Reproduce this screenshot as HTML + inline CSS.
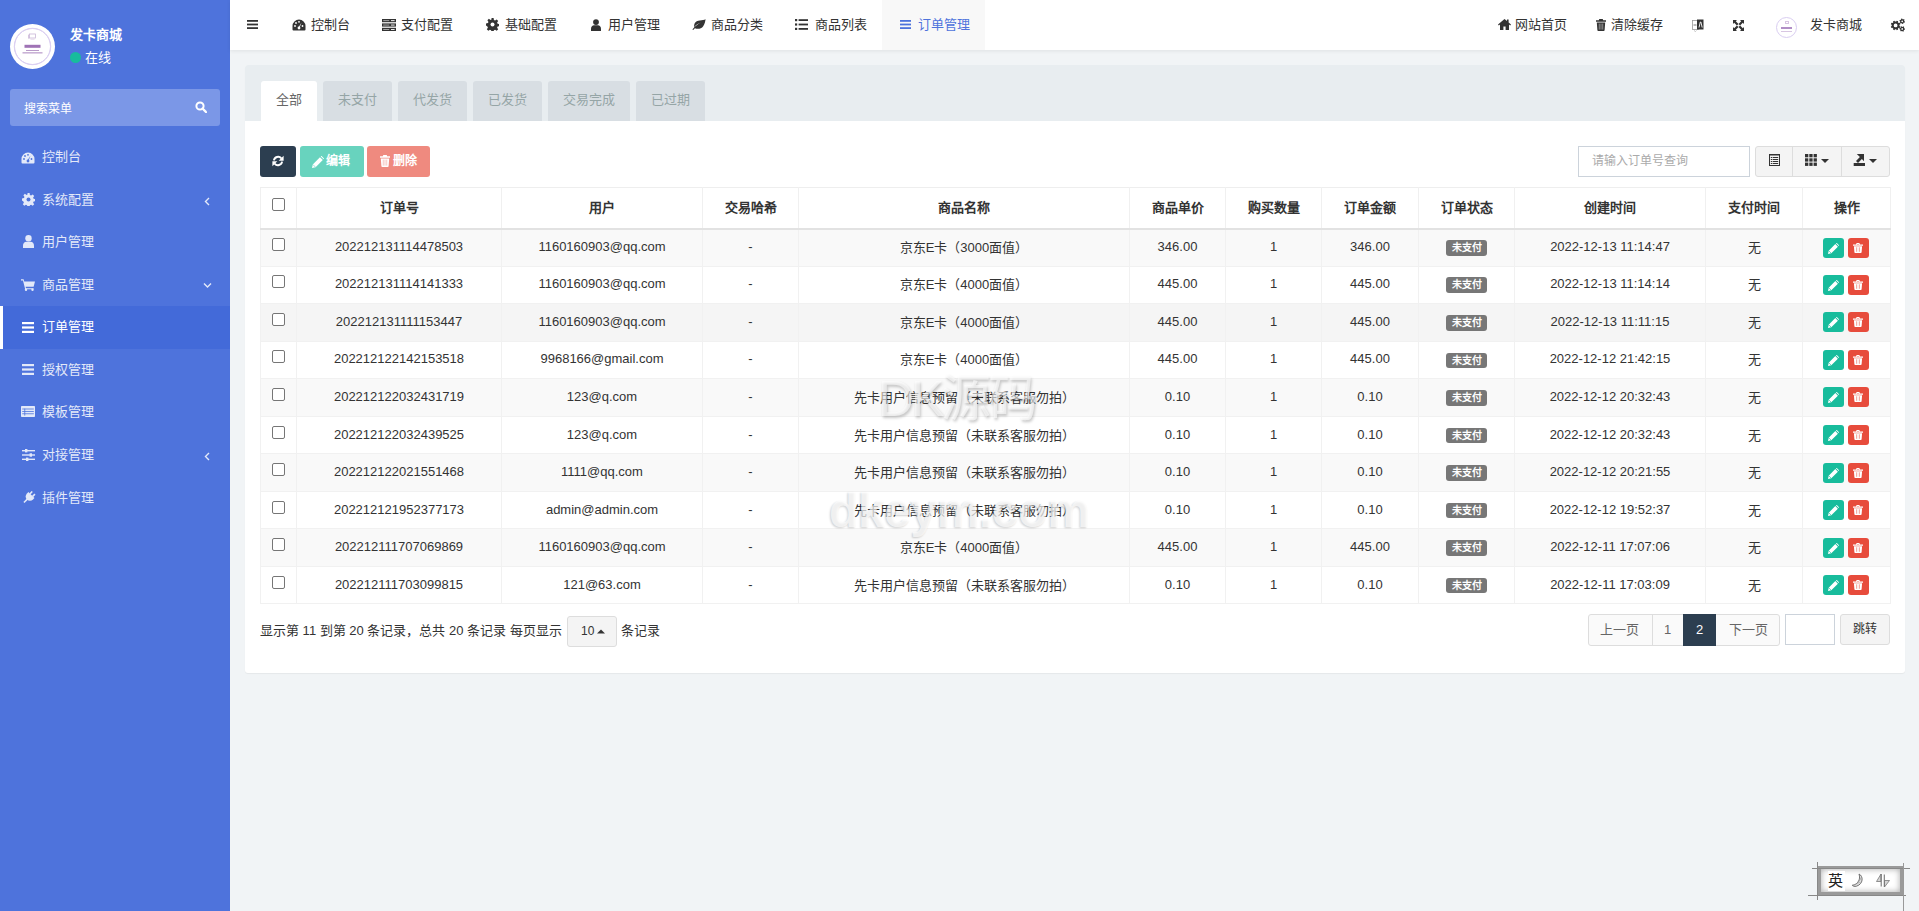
<!DOCTYPE html>
<html lang="zh-CN"><head><meta charset="utf-8">
<style>
*{box-sizing:border-box;margin:0;padding:0}
html,body{width:1919px;height:911px;overflow:hidden}
body{font-family:"Liberation Sans",sans-serif;font-size:13px;color:#333;background:#f1f4f6;position:relative}
.abs{position:absolute}
#sb{position:absolute;left:0;top:0;width:230px;height:911px;background:#4e73dc}
#hd{position:absolute;left:230px;top:0;width:1689px;height:50px;background:#fff;box-shadow:0 1px 4px rgba(0,0,0,.08)}
.nv{position:absolute;top:0;height:50px;line-height:50px;white-space:nowrap;color:#333;font-size:13px}
#panel{position:absolute;left:245px;top:65px;width:1660px;height:608px;background:#fff;border-radius:3px;box-shadow:0 1px 1px rgba(0,0,0,.05)}
#ph{position:absolute;left:0;top:0;width:1660px;height:56px;background:#e8edf0;border-radius:3px 3px 0 0}
.tab{position:absolute;top:16px;height:40px;line-height:38px;text-align:center;background:#d8dee3;color:#95a5a6;border-radius:3px 3px 0 0;font-size:13px}
.tab.on{background:#fff;color:#666}
.mi{position:absolute;left:0;width:230px;height:43px;line-height:43px;color:#fff;font-size:13px;white-space:nowrap}
.mi .t{position:absolute;left:42px;top:0}
.mi svg{position:absolute}
.btn{position:absolute;height:31px;border-radius:3px}
table{border-collapse:collapse;table-layout:fixed}
#tbl{font-size:13px;color:#333}
#tbl th{height:41px;border:1px solid #f0f0f0;border-top-color:#eee;border-bottom:2px solid #e2e2e2;text-align:center;font-weight:bold;padding:0 0 2px 0;vertical-align:middle}
#tbl td{height:37.55px;border:1px solid #f1f1f1;text-align:center;padding:0 0 2px 0;vertical-align:middle;white-space:nowrap}
.cb{display:inline-block;width:13px;height:13px;border:1px solid #767676;border-radius:2px;background:#fff;vertical-align:middle;position:relative;top:-3px}
.lbl{display:inline-block;background:#777;color:#fff;font-weight:bold;font-size:10px;line-height:15.6px;height:15.6px;padding:0 5.5px;border-radius:3px;vertical-align:middle;position:relative;top:1px}
.ab{display:inline-block;width:21px;height:20px;border-radius:3px;vertical-align:middle;position:relative;top:1px;left:-1px;margin:0 2px}
.ab svg{position:absolute;left:5px;top:5px}
.ae{background:#18bc9c}.ad{background:#e74c3c}
</style></head><body>
<div id="sb">
<div class="abs" style="left:10px;top:24px;width:45px;height:45px;border-radius:50%;background:#fff"></div>
<div class="abs" style="left:14px;top:28px;width:37px;height:37px;border-radius:50%;border:1px solid #d9cdf1"></div>
<svg class="abs" style="left:10px;top:24px" width="45" height="45" viewBox="0 0 45 45"><circle cx="22.5" cy="22.5" r="18.2" fill="none" stroke="#dcd0f2" stroke-width="1"/><rect x="19.5" y="10" width="6" height="4" fill="none" stroke="#c9b6d8" stroke-width=".8"/><rect x="18" y="10.6" width="1.2" height="4" fill="#d6c6e0"/><path d="M20.5 15.3h4" stroke="#d6c6e0" stroke-width=".6"/><rect x="14.5" y="20.8" width="16" height="3" fill="#8e5aa8" opacity=".85"/><rect x="16" y="26" width="13" height="1" fill="#b99bc9"/><rect x="12.5" y="28.5" width="20" height="0.8" fill="#9466ad"/></svg>
<div class="abs" style="left:70px;top:26px;color:#fff;font-weight:bold;font-size:13px;line-height:18px">发卡商城</div>
<div class="abs" style="left:70px;top:52px;width:11px;height:11px;border-radius:50%;background:#18bc9c"></div>
<div class="abs" style="left:85px;top:49px;color:#fff;font-size:13px;line-height:18px">在线</div>
<div class="abs" style="left:10px;top:89px;width:210px;height:37px;border-radius:3px;background:#7b97e7"></div>
<div class="abs" style="left:24px;top:100.5px;color:#fff;font-size:12px;line-height:17px">搜索菜单</div>
<svg class="abs" style="left:195px;top:101px" width="12" height="12" viewBox="0 0 12 12"><circle cx="5" cy="5" r="3.6" fill="none" stroke="#fff" stroke-width="2"/><path d="M7.5 7.5L11 11" stroke="#fff" stroke-width="2.4" stroke-linecap="round"/></svg>
<div class="mi" style="top:134.5px;"><svg style="left:21px;top:17.0px;fill:#e3e9f9" width="14" height="12" viewBox="0 0 14 12"><path d="M7 0.5A6.5 6.5 0 0 0 0.5 7v3.5a1 1 0 0 0 1 1h11a1 1 0 0 0 1-1V7A6.5 6.5 0 0 0 7 0.5z" /><g fill="#4e73dc"><circle cx="3" cy="7" r="0.9"/><circle cx="4" cy="4" r="0.9"/><circle cx="7" cy="2.8" r="0.9"/><circle cx="10.5" cy="7" r="0.9"/><path d="M9.6 3.4L7.6 8.6 6.6 8.2z"/><circle cx="7" cy="9" r="1.4"/></g></svg><span class="t" style="color:#e3e9f9;top:0px">控制台</span></div>
<div class="mi" style="top:177.5px;"><svg style="left:22px;top:15.5px;fill:#e3e9f9" width="13" height="13" viewBox="0 0 13 13"><path d="M5.4 0h2.2l.3 1.9 1.2.6 1.6-1.1 1.5 1.5-1.1 1.6.5 1.2 1.9.3v2.2l-1.9.3-.5 1.2 1.1 1.6-1.5 1.5-1.6-1.1-1.2.5-.3 1.9H5.4l-.3-1.9-1.2-.5-1.6 1.1-1.5-1.5 1.1-1.6-.5-1.2L0 7.6V5.4l1.9-.3.6-1.2-1.1-1.6 1.5-1.5 1.6 1.1 1.2-.6z"/><circle cx="6.5" cy="6.5" r="2" fill="#4e73dc"/></svg><span class="t" style="color:#e3e9f9;top:0px">系统配置</span><svg style="left:204px;top:19px" width="6" height="9" viewBox="0 0 6 9"><path d="M5 1L1.5 4.5 5 8" fill="none" stroke="#e3e9f9" stroke-width="1.4"/></svg></div>
<div class="mi" style="top:219.5px;"><svg style="left:23px;top:15.5px;fill:#e3e9f9" width="11" height="13" viewBox="0 0 11 13"><circle cx="5.5" cy="3.3" r="3.2"/><path d="M0 13v-2.5C0 8.3 1.6 6.8 3.3 6.8h4.4c1.7 0 3.3 1.5 3.3 3.7V13z"/></svg><span class="t" style="color:#e3e9f9;top:0px">用户管理</span></div>
<div class="mi" style="top:262.5px;"><svg style="left:21px;top:16.5px;fill:#e3e9f9" width="14" height="12" viewBox="0 0 14 12"><path d="M0 0.3h2.6l.6 2.2H14l-1.4 5.3H4.6l.4 1.4h7.6v1H4.2L2 1.4H0z"/><circle cx="5" cy="10.8" r="1.2"/><circle cx="11.5" cy="10.8" r="1.2"/></svg><span class="t" style="color:#e3e9f9;top:0px">商品管理</span><svg style="left:203px;top:19px" width="9" height="6" viewBox="0 0 9 6"><path d="M1 1.5L4.5 5 8 1.5" fill="none" stroke="#e3e9f9" stroke-width="1.4"/></svg></div>
<div class="mi" style="top:306.0px;background:#436ad9;"><div class="abs" style="left:0;top:0;width:3px;height:43px;background:#fff"></div><svg style="left:22px;top:15.5px;fill:#fff" width="13" height="11" viewBox="0 0 13 11"><rect x="0" y="0" width="12" height="2.2"/><rect x="0" y="4.4" width="12" height="2.2"/><rect x="0" y="8.8" width="12" height="2.2"/></svg><span class="t" style="color:#fff;top:-1px">订单管理</span></div>
<div class="mi" style="top:347.5px;"><svg style="left:22px;top:16.5px;fill:#e3e9f9" width="13" height="11" viewBox="0 0 13 11"><rect x="0" y="0" width="12" height="2.2"/><rect x="0" y="4.4" width="12" height="2.2"/><rect x="0" y="8.8" width="12" height="2.2"/></svg><span class="t" style="color:#e3e9f9;top:0px">授权管理</span></div>
<div class="mi" style="top:389.5px;"><svg style="left:21px;top:16.5px;fill:#e3e9f9" width="14" height="11" viewBox="0 0 14 11"><path d="M0.8 0h12.4a.8.8 0 0 1 .8.8v9.4a.8.8 0 0 1-.8.8H0.8a.8.8 0 0 1-.8-.8V0.8A.8.8 0 0 1 .8 0z"/><g fill="#4e73dc"><rect x="1.2" y="2.6" width="11.6" height="0.8"/><rect x="1.2" y="5" width="11.6" height="0.8"/><rect x="1.2" y="7.4" width="11.6" height="0.8"/><rect x="3.4" y="2.6" width="0.8" height="7"/></g></svg><span class="t" style="color:#e3e9f9;top:0px">模板管理</span></div>
<div class="mi" style="top:432.5px;"><svg style="left:22px;top:16.5px;fill:#e3e9f9" width="13" height="12" viewBox="0 0 13 12"><rect x="0" y="1" width="13" height="1.4"/><rect x="0" y="5.3" width="13" height="1.4"/><rect x="0" y="9.6" width="13" height="1.4"/><rect x="3" y="0" width="2.4" height="3.4"/><rect x="7.6" y="4.3" width="2.4" height="3.4"/><rect x="4" y="8.6" width="2.4" height="3.4"/></svg><span class="t" style="color:#e3e9f9;top:0px">对接管理</span><svg style="left:204px;top:19px" width="6" height="9" viewBox="0 0 6 9"><path d="M5 1L1.5 4.5 5 8" fill="none" stroke="#e3e9f9" stroke-width="1.4"/></svg></div>
<div class="mi" style="top:475.5px;"><svg style="left:21px;top:15.0px;fill:#e3e9f9" width="15" height="14" viewBox="0 0 15 14"><g transform="translate(8.2 6.2) rotate(45) scale(0.78) translate(-5 -8)"><rect x="1.6" y="0" width="2" height="4.5"/><rect x="6.4" y="0" width="2" height="4.5"/><path d="M-0.5 4h11v2.6a5.5 5.5 0 0 1-5.5 5.5 5.5 5.5 0 0 1-5.5-5.5z"/><rect x="4" y="11" width="2" height="6.5"/></g></svg><span class="t" style="color:#e3e9f9;top:0px">插件管理</span></div>
</div>
<div id="hd"><svg class="abs" style="left:17px;top:20px;fill:#333" width="11" height="9" viewBox="0 0 11 9"><rect y="0" width="11" height="1.8"/><rect y="3.6" width="11" height="1.8"/><rect y="7.2" width="11" height="1.8"/></svg><svg class="abs" style="left:62px;top:19px;fill:#333" width="14" height="12" viewBox="0 0 14 12"><path d="M7 0.5A6.5 6.5 0 0 0 0.5 7v3.5a1 1 0 0 0 1 1h11a1 1 0 0 0 1-1V7A6.5 6.5 0 0 0 7 0.5z" /><g fill="#fff"><circle cx="3" cy="7" r="0.9"/><circle cx="4" cy="4" r="0.9"/><circle cx="7" cy="2.8" r="0.9"/><circle cx="10.5" cy="7" r="0.9"/><path d="M9.6 3.4L7.6 8.6 6.6 8.2z"/><circle cx="7" cy="9" r="1.4"/></g></svg><div class="nv" style="left:81px;top:0px;color:#333">控制台</div>
<svg class="abs" style="left:152px;top:19px;fill:#333" width="14" height="12" viewBox="0 0 14 12"><rect x="0" y="0" width="14" height="3.2"/><rect x="0" y="4.4" width="14" height="3.2"/><rect x="0" y="8.8" width="14" height="3.2"/><g fill="#fff"><rect x="9" y="1.2" width="3.6" height="0.9"/><rect x="9" y="5.6" width="3.6" height="0.9"/><rect x="9" y="10" width="3.6" height="0.9"/><rect x="1.2" y="1.2" width="6" height="0.9" opacity=".6"/><rect x="1.2" y="5.6" width="6" height="0.9" opacity=".6"/><rect x="1.2" y="10" width="6" height="0.9" opacity=".6"/></g></svg><div class="nv" style="left:171px;top:0px;color:#333">支付配置</div>
<svg class="abs" style="left:256px;top:18px;fill:#333" width="13" height="13" viewBox="0 0 13 13"><path d="M5.4 0h2.2l.3 1.9 1.2.6 1.6-1.1 1.5 1.5-1.1 1.6.5 1.2 1.9.3v2.2l-1.9.3-.5 1.2 1.1 1.6-1.5 1.5-1.6-1.1-1.2.5-.3 1.9H5.4l-.3-1.9-1.2-.5-1.6 1.1-1.5-1.5 1.1-1.6-.5-1.2L0 7.6V5.4l1.9-.3.6-1.2-1.1-1.6 1.5-1.5 1.6 1.1 1.2-.6z"/><circle cx="6.5" cy="6.5" r="2" fill="#fff"/></svg><div class="nv" style="left:274.5px;top:0px;color:#333">基础配置</div>
<svg class="abs" style="left:361px;top:19px;fill:#333" width="10" height="12" viewBox="0 0 11 13"><circle cx="5.5" cy="3.3" r="3.2"/><path d="M0 13v-2.5C0 8.3 1.6 6.8 3.3 6.8h4.4c1.7 0 3.3 1.5 3.3 3.7V13z"/></svg><div class="nv" style="left:377.5px;top:0px;color:#333">用户管理</div>
<svg class="abs" style="left:462px;top:19px;fill:#333" width="14" height="11" viewBox="0 0 14 11"><path d="M13.6 0.2C11 1.6 4.5 0.5 2.6 4.4 1.6 6.4 2.4 8 2.4 8 3.8 6 6.4 4.4 9 3.6 6.4 4.8 3 7.2 0.4 10.4L1.2 11C1.8 10.2 2.4 9.6 3 9.2 5.6 10.4 9.4 9.8 11.2 7.2 13 4.6 13.2 2 13.6 0.2z"/></svg><div class="nv" style="left:481px;top:0px;color:#333">商品分类</div>
<svg class="abs" style="left:565px;top:19px;fill:#333" width="13" height="11" viewBox="0 0 13 11"><rect x="0" y="0" width="2.2" height="2.2"/><rect x="0" y="4.4" width="2.2" height="2.2"/><rect x="0" y="8.8" width="2.2" height="2.2"/><rect x="3.6" y="0.2" width="9.4" height="1.8"/><rect x="3.6" y="4.6" width="9.4" height="1.8"/><rect x="3.6" y="9" width="9.4" height="1.8"/></svg><div class="nv" style="left:585px;top:0px;color:#333">商品列表</div>
<div class="abs" style="left:652px;top:0;width:103px;height:50px;background:#f8f8f8"></div><svg class="abs" style="left:670px;top:20px;fill:#4e73dc" width="11" height="9" viewBox="0 0 11 9"><rect y="0" width="11" height="1.8"/><rect y="3.6" width="11" height="1.8"/><rect y="7.2" width="11" height="1.8"/></svg><div class="nv" style="left:688px;top:0px;color:#4e73dc">订单管理</div>
<svg class="abs" style="left:1268px;top:19px;fill:#333" width="13" height="11" viewBox="0 0 13 11"><path d="M6.5 0L0 5.6l.8.9L2 5.5V11h3.4V7.6h2.2V11H11V5.5l1.2 1 .8-.9L10.6 3.5V0.6H9v1.5z"/></svg><div class="nv" style="left:1284.5px;top:0px;color:#333">网站首页</div>
<svg class="abs" style="left:1366px;top:19px;fill:#333" width="10" height="12" viewBox="0 0 10 12"><path d="M3.3 0h3.4l.5 1.3H10v1.4H0V1.3h2.8z"/><path d="M0.8 3.4h8.4L8.6 11.2a.9.9 0 0 1-.9.8H2.3a.9.9 0 0 1-.9-.8z"/><g fill="#fff" opacity=".5"><rect x="2.8" y="4.6" width="0.9" height="6"/><rect x="4.55" y="4.6" width="0.9" height="6"/><rect x="6.3" y="4.6" width="0.9" height="6"/></g></svg><div class="nv" style="left:1380.5px;top:0px;color:#333">清除缓存</div>
<svg class="abs" style="left:1462px;top:19px" width="12" height="13" viewBox="0 0 12 13"><rect x="0.5" y="1.5" width="6" height="9" fill="#fff" stroke="#999" stroke-width="0.8"/><path d="M5 0.5h6.5v10H5z" fill="#333"/><path d="M7 8.5L8.3 3h0.6l1.3 5.5" stroke="#fff" stroke-width="0.9" fill="none"/><path d="M1.5 6h3" stroke="#555" stroke-width=".8"/><path d="M2 11.5l1.5 1 1-1" stroke="#aaa" stroke-width=".7" fill="none"/></svg><svg class="abs" style="left:1503px;top:20px" width="11" height="11" viewBox="0 0 11 11"><path d="M0 0h4L2.8 1.2 5.5 3.9 3.9 5.5 1.2 2.8 0 4z M11 0v4L9.8 2.8 7.1 5.5 5.5 3.9 8.2 1.2 7 0z M0 11V7l1.2 1.2 2.7-2.7 1.6 1.6-2.7 2.7L4 11z M11 11H7l1.2-1.2-2.7-2.7 1.6-1.6 2.7 2.7L11 7z" fill="#333"/></svg><div class="abs" style="left:1546px;top:17px;width:21px;height:21px;border-radius:50%;border:1px solid #d9cdf1;background:#fff"></div><div class="abs" style="left:1551px;top:27px;width:11px;height:2px;background:#b18fc6"></div><div class="abs" style="left:1551px;top:31px;width:11px;height:1px;background:#d8c6e2"></div><div class="abs" style="left:1555px;top:21px;width:4px;height:3px;border:1px solid #d8c6e2"></div><div class="nv" style="left:1579.5px;top:0px">发卡商城</div><svg class="abs" style="left:1660px;top:18px" width="16" height="15" viewBox="0 0 16 15"><path fill-rule="evenodd" fill="#333" d="M9.50 7.40 L9.45 8.01 L10.36 8.54 L9.78 9.96 L8.76 9.69 L8.36 10.16 L7.89 10.56 L8.16 11.58 L6.74 12.16 L6.21 11.25 L5.60 11.30 L4.99 11.25 L4.46 12.16 L3.04 11.58 L3.31 10.56 L2.84 10.16 L2.44 9.69 L1.42 9.96 L0.84 8.54 L1.75 8.01 L1.70 7.40 L1.75 6.79 L0.84 6.26 L1.42 4.84 L2.44 5.11 L2.84 4.64 L3.31 4.24 L3.04 3.22 L4.46 2.64 L4.99 3.55 L5.60 3.50 L6.21 3.55 L6.74 2.64 L8.16 3.22 L7.89 4.24 L8.36 4.64 L8.76 5.11 L9.78 4.84 L10.36 6.26 L9.45 6.79Z M7.50 7.40 A1.9 1.9 0 1 0 3.70 7.40 A1.9 1.9 0 1 0 7.50 7.40Z M14.25 2.83 L14.30 3.27 L14.99 3.55 L14.64 4.67 L13.92 4.51 L13.63 4.84 L13.28 5.10 L13.37 5.84 L12.24 6.10 L12.01 5.39 L11.58 5.31 L11.18 5.13 L10.59 5.59 L9.80 4.73 L10.29 4.18 L10.15 3.77 L10.10 3.33 L9.41 3.05 L9.76 1.93 L10.48 2.09 L10.77 1.76 L11.12 1.50 L11.03 0.76 L12.16 0.50 L12.39 1.21 L12.82 1.29 L13.22 1.47 L13.81 1.01 L14.60 1.87 L14.11 2.42Z M13.05 3.30 A0.85 0.85 0 1 0 11.35 3.30 A0.85 0.85 0 1 0 13.05 3.30Z M14.11 10.04 L14.25 10.45 L14.98 10.59 L14.87 11.75 L14.12 11.75 L13.90 12.13 L13.61 12.45 L13.86 13.16 L12.80 13.64 L12.43 12.99 L11.99 12.99 L11.56 12.90 L11.07 13.46 L10.13 12.78 L10.51 12.14 L10.29 11.76 L10.15 11.35 L9.42 11.21 L9.53 10.05 L10.28 10.05 L10.50 9.67 L10.79 9.35 L10.54 8.64 L11.60 8.16 L11.97 8.81 L12.41 8.81 L12.84 8.90 L13.33 8.34 L14.27 9.02 L13.89 9.66Z M13.05 10.90 A0.85 0.85 0 1 0 11.35 10.90 A0.85 0.85 0 1 0 13.05 10.90Z"/></svg></div>
<div id="panel">
<div id="ph"></div>
<div class="tab on" style="left:16px;width:56px">全部</div>
<div class="tab" style="left:78px;width:69px">未支付</div>
<div class="tab" style="left:153px;width:69px">代发货</div>
<div class="tab" style="left:228px;width:69px">已发货</div>
<div class="tab" style="left:303px;width:82px">交易完成</div>
<div class="tab" style="left:391px;width:69px">已过期</div>
<div class="btn" style="left:15px;top:81px;width:36px;background:#2c3e50"><svg class="abs" style="left:12px;top:9px" width="12" height="12" viewBox="0 0 12 12"><path d="M1.9 5.4A4.2 4.2 0 0 1 9.3 3.4" stroke="#fff" stroke-width="1.9" fill="none"/><path d="M11.6 0.8v4.9H6.7z" fill="#fff"/><path d="M10.1 6.6A4.2 4.2 0 0 1 2.7 8.6" stroke="#fff" stroke-width="1.9" fill="none"/><path d="M0.4 11.2V6.3h4.9z" fill="#fff"/></svg></div>
<div class="btn" style="left:55px;top:81px;width:64px;background:#18bc9c;opacity:.65"><svg class="abs" style="left:12px;top:10px" width="12" height="12" viewBox="0 0 11 11"><path d="M0 11L0.7 7.7 7.3 1.1 9.9 3.7 3.3 10.3Z M8 0.4L8.6-0.2 11.2 2.4 10.6 3Z" fill="#fff"/><path d="M0.9 7.9L3.1 10.1" stroke="#18bc9c" stroke-width=".6"/></svg><span class="abs" style="left:26px;top:0;line-height:31px;color:#fff;font-size:12px;font-weight:bold">编辑</span></div>
<div class="btn" style="left:122px;top:81px;width:63px;background:#e74c3c;opacity:.65"><svg class="abs" style="left:13px;top:9px" width="10" height="12" viewBox="0 0 10 12"><path d="M3.3 0h3.4l.5 1.3H10v1.4H0V1.3h2.8z" fill="#fff"/><path d="M0.8 3.4h8.4L8.6 11.2a.9.9 0 0 1-.9.8H2.3a.9.9 0 0 1-.9-.8z" fill="#fff"/><g fill="#e74c3c" opacity=".5"><rect x="2.8" y="4.6" width="0.9" height="6"/><rect x="4.55" y="4.6" width="0.9" height="6"/><rect x="6.3" y="4.6" width="0.9" height="6"/></g></svg><span class="abs" style="left:26px;top:0;line-height:31px;color:#fff;font-size:12px;font-weight:bold">删除</span></div>
<div class="abs" style="left:1333px;top:81px;width:172px;height:31px;border:1px solid #ccd3db;background:#fff"><span class="abs" style="left:13px;top:0;line-height:29px;color:#aaa;font-size:12px">请输入订单号查询</span></div>
<div class="abs" style="left:1510px;top:81px;width:135px;height:31px;border:1px solid #ddd;background:#f4f4f4;border-radius:3px"></div>
<div class="abs" style="left:1547px;top:81px;width:1px;height:31px;background:#ddd"></div><div class="abs" style="left:1596px;top:81px;width:1px;height:31px;background:#ddd"></div>
<svg class="abs" style="left:1524px;top:89px" width="11" height="12" viewBox="0 0 11 12"><path fill="#333" fill-rule="evenodd" d="M0 0h11v12H0zM1 1.6v9.4h9V1.6z"/><g fill="#333"><rect x="1.8" y="3" width="1.2" height="1"/><rect x="3.6" y="3" width="5.6" height="1"/><rect x="1.8" y="5" width="1.2" height="1"/><rect x="3.6" y="5" width="5.6" height="1"/><rect x="1.8" y="7" width="1.2" height="1"/><rect x="3.6" y="7" width="5.6" height="1"/><rect x="1.8" y="9" width="1.2" height="1"/><rect x="3.6" y="9" width="5.6" height="1"/></g></svg>
<svg class="abs" style="left:1560px;top:89px" width="24" height="12" viewBox="0 0 24 12"><g fill="#333"><rect x="0" y="0" width="3.3" height="3.3"/><rect x="4.3" y="0" width="3.3" height="3.3"/><rect x="8.6" y="0" width="3.3" height="3.3"/><rect x="0" y="4.3" width="3.3" height="3.3"/><rect x="4.3" y="4.3" width="3.3" height="3.3"/><rect x="8.6" y="4.3" width="3.3" height="3.3"/><rect x="0" y="8.6" width="3.3" height="3.3"/><rect x="4.3" y="8.6" width="3.3" height="3.3"/><rect x="8.6" y="8.6" width="3.3" height="3.3"/><path d="M16 5h8l-4 4z"/></g></svg>
<svg class="abs" style="left:1608px;top:89px" width="24" height="12" viewBox="0 0 24 12"><g fill="#333"><rect x="0.7" y="9" width="11.3" height="3"/><path d="M3.8 0H11V7.2L8.9 5.1 5 9 3 7 6.9 3.1z"/><path d="M16 5h8l-4 4z"/></g></svg>
<table id="tbl" style="position:absolute;left:15px;top:122px;width:1630px">
<colgroup><col style="width:36px"><col style="width:205px"><col style="width:201px"><col style="width:96px"><col style="width:331px"><col style="width:96px"><col style="width:96px"><col style="width:97px"><col style="width:96px"><col style="width:191px"><col style="width:97px"><col style="width:88px"></colgroup>
<thead><tr><th><span class=cb></span></th><th>订单号</th><th>用户</th><th>交易哈希</th><th>商品名称</th><th>商品单价</th><th>购买数量</th><th>订单金额</th><th>订单状态</th><th>创建时间</th><th>支付时间</th><th>操作</th></tr></thead>
<tbody>
<tr style="background:#f9f9f9"><td><span class="cb"></span></td><td>202212131114478503</td><td>1160160903@qq.com</td><td>-</td><td>京东E卡（3000面值）</td><td>346.00</td><td>1</td><td>346.00</td><td><span class="lbl">未支付</span></td><td>2022-12-13 11:14:47</td><td>无</td><td><span class="ab ae"><svg width="11" height="11" viewBox="0 0 11 11"><path d="M0 11L0.7 7.7 7.3 1.1 9.9 3.7 3.3 10.3Z M8 0.4L8.6-0.2 11.2 2.4 10.6 3Z" fill="#fff"/><path d="M0.9 7.9L3.1 10.1" stroke="#18bc9c" stroke-width=".6"/></svg></span><span class="ab ad"><svg width="10" height="10" viewBox="0 0 10 10"><path d="M3.2 1.4V0.9A.9.9 0 0 1 4.1 0h1.8a.9.9 0 0 1 .9.9v0.5H10v1.3H0V1.4zM4.2 1.4h1.6V0.9H4.2z" fill="#fff"/><path d="M0.9 3.2h8.2L8.6 9.3a.8.8 0 0 1-.8.7H2.2a.8.8 0 0 1-.8-.7z" fill="#fff"/><rect x="3.1" y="4.3" width="1.1" height="4.5" fill="#f2a59c"/><rect x="5.8" y="4.3" width="1.1" height="4.5" fill="#f2a59c"/></svg></span></td></tr>
<tr style="background:#fff"><td><span class="cb"></span></td><td>202212131114141333</td><td>1160160903@qq.com</td><td>-</td><td>京东E卡（4000面值）</td><td>445.00</td><td>1</td><td>445.00</td><td><span class="lbl">未支付</span></td><td>2022-12-13 11:14:14</td><td>无</td><td><span class="ab ae"><svg width="11" height="11" viewBox="0 0 11 11"><path d="M0 11L0.7 7.7 7.3 1.1 9.9 3.7 3.3 10.3Z M8 0.4L8.6-0.2 11.2 2.4 10.6 3Z" fill="#fff"/><path d="M0.9 7.9L3.1 10.1" stroke="#18bc9c" stroke-width=".6"/></svg></span><span class="ab ad"><svg width="10" height="10" viewBox="0 0 10 10"><path d="M3.2 1.4V0.9A.9.9 0 0 1 4.1 0h1.8a.9.9 0 0 1 .9.9v0.5H10v1.3H0V1.4zM4.2 1.4h1.6V0.9H4.2z" fill="#fff"/><path d="M0.9 3.2h8.2L8.6 9.3a.8.8 0 0 1-.8.7H2.2a.8.8 0 0 1-.8-.7z" fill="#fff"/><rect x="3.1" y="4.3" width="1.1" height="4.5" fill="#f2a59c"/><rect x="5.8" y="4.3" width="1.1" height="4.5" fill="#f2a59c"/></svg></span></td></tr>
<tr style="background:#f5f5f5"><td><span class="cb"></span></td><td>202212131111153447</td><td>1160160903@qq.com</td><td>-</td><td>京东E卡（4000面值）</td><td>445.00</td><td>1</td><td>445.00</td><td><span class="lbl">未支付</span></td><td>2022-12-13 11:11:15</td><td>无</td><td><span class="ab ae"><svg width="11" height="11" viewBox="0 0 11 11"><path d="M0 11L0.7 7.7 7.3 1.1 9.9 3.7 3.3 10.3Z M8 0.4L8.6-0.2 11.2 2.4 10.6 3Z" fill="#fff"/><path d="M0.9 7.9L3.1 10.1" stroke="#18bc9c" stroke-width=".6"/></svg></span><span class="ab ad"><svg width="10" height="10" viewBox="0 0 10 10"><path d="M3.2 1.4V0.9A.9.9 0 0 1 4.1 0h1.8a.9.9 0 0 1 .9.9v0.5H10v1.3H0V1.4zM4.2 1.4h1.6V0.9H4.2z" fill="#fff"/><path d="M0.9 3.2h8.2L8.6 9.3a.8.8 0 0 1-.8.7H2.2a.8.8 0 0 1-.8-.7z" fill="#fff"/><rect x="3.1" y="4.3" width="1.1" height="4.5" fill="#f2a59c"/><rect x="5.8" y="4.3" width="1.1" height="4.5" fill="#f2a59c"/></svg></span></td></tr>
<tr style="background:#fff"><td><span class="cb"></span></td><td>202212122142153518</td><td>9968166@gmail.com</td><td>-</td><td>京东E卡（4000面值）</td><td>445.00</td><td>1</td><td>445.00</td><td><span class="lbl">未支付</span></td><td>2022-12-12 21:42:15</td><td>无</td><td><span class="ab ae"><svg width="11" height="11" viewBox="0 0 11 11"><path d="M0 11L0.7 7.7 7.3 1.1 9.9 3.7 3.3 10.3Z M8 0.4L8.6-0.2 11.2 2.4 10.6 3Z" fill="#fff"/><path d="M0.9 7.9L3.1 10.1" stroke="#18bc9c" stroke-width=".6"/></svg></span><span class="ab ad"><svg width="10" height="10" viewBox="0 0 10 10"><path d="M3.2 1.4V0.9A.9.9 0 0 1 4.1 0h1.8a.9.9 0 0 1 .9.9v0.5H10v1.3H0V1.4zM4.2 1.4h1.6V0.9H4.2z" fill="#fff"/><path d="M0.9 3.2h8.2L8.6 9.3a.8.8 0 0 1-.8.7H2.2a.8.8 0 0 1-.8-.7z" fill="#fff"/><rect x="3.1" y="4.3" width="1.1" height="4.5" fill="#f2a59c"/><rect x="5.8" y="4.3" width="1.1" height="4.5" fill="#f2a59c"/></svg></span></td></tr>
<tr style="background:#f9f9f9"><td><span class="cb"></span></td><td>202212122032431719</td><td>123@q.com</td><td>-</td><td>先卡用户信息预留（未联系客服勿拍）</td><td>0.10</td><td>1</td><td>0.10</td><td><span class="lbl">未支付</span></td><td>2022-12-12 20:32:43</td><td>无</td><td><span class="ab ae"><svg width="11" height="11" viewBox="0 0 11 11"><path d="M0 11L0.7 7.7 7.3 1.1 9.9 3.7 3.3 10.3Z M8 0.4L8.6-0.2 11.2 2.4 10.6 3Z" fill="#fff"/><path d="M0.9 7.9L3.1 10.1" stroke="#18bc9c" stroke-width=".6"/></svg></span><span class="ab ad"><svg width="10" height="10" viewBox="0 0 10 10"><path d="M3.2 1.4V0.9A.9.9 0 0 1 4.1 0h1.8a.9.9 0 0 1 .9.9v0.5H10v1.3H0V1.4zM4.2 1.4h1.6V0.9H4.2z" fill="#fff"/><path d="M0.9 3.2h8.2L8.6 9.3a.8.8 0 0 1-.8.7H2.2a.8.8 0 0 1-.8-.7z" fill="#fff"/><rect x="3.1" y="4.3" width="1.1" height="4.5" fill="#f2a59c"/><rect x="5.8" y="4.3" width="1.1" height="4.5" fill="#f2a59c"/></svg></span></td></tr>
<tr style="background:#fff"><td><span class="cb"></span></td><td>202212122032439525</td><td>123@q.com</td><td>-</td><td>先卡用户信息预留（未联系客服勿拍）</td><td>0.10</td><td>1</td><td>0.10</td><td><span class="lbl">未支付</span></td><td>2022-12-12 20:32:43</td><td>无</td><td><span class="ab ae"><svg width="11" height="11" viewBox="0 0 11 11"><path d="M0 11L0.7 7.7 7.3 1.1 9.9 3.7 3.3 10.3Z M8 0.4L8.6-0.2 11.2 2.4 10.6 3Z" fill="#fff"/><path d="M0.9 7.9L3.1 10.1" stroke="#18bc9c" stroke-width=".6"/></svg></span><span class="ab ad"><svg width="10" height="10" viewBox="0 0 10 10"><path d="M3.2 1.4V0.9A.9.9 0 0 1 4.1 0h1.8a.9.9 0 0 1 .9.9v0.5H10v1.3H0V1.4zM4.2 1.4h1.6V0.9H4.2z" fill="#fff"/><path d="M0.9 3.2h8.2L8.6 9.3a.8.8 0 0 1-.8.7H2.2a.8.8 0 0 1-.8-.7z" fill="#fff"/><rect x="3.1" y="4.3" width="1.1" height="4.5" fill="#f2a59c"/><rect x="5.8" y="4.3" width="1.1" height="4.5" fill="#f2a59c"/></svg></span></td></tr>
<tr style="background:#f9f9f9"><td><span class="cb"></span></td><td>202212122021551468</td><td>1111@qq.com</td><td>-</td><td>先卡用户信息预留（未联系客服勿拍）</td><td>0.10</td><td>1</td><td>0.10</td><td><span class="lbl">未支付</span></td><td>2022-12-12 20:21:55</td><td>无</td><td><span class="ab ae"><svg width="11" height="11" viewBox="0 0 11 11"><path d="M0 11L0.7 7.7 7.3 1.1 9.9 3.7 3.3 10.3Z M8 0.4L8.6-0.2 11.2 2.4 10.6 3Z" fill="#fff"/><path d="M0.9 7.9L3.1 10.1" stroke="#18bc9c" stroke-width=".6"/></svg></span><span class="ab ad"><svg width="10" height="10" viewBox="0 0 10 10"><path d="M3.2 1.4V0.9A.9.9 0 0 1 4.1 0h1.8a.9.9 0 0 1 .9.9v0.5H10v1.3H0V1.4zM4.2 1.4h1.6V0.9H4.2z" fill="#fff"/><path d="M0.9 3.2h8.2L8.6 9.3a.8.8 0 0 1-.8.7H2.2a.8.8 0 0 1-.8-.7z" fill="#fff"/><rect x="3.1" y="4.3" width="1.1" height="4.5" fill="#f2a59c"/><rect x="5.8" y="4.3" width="1.1" height="4.5" fill="#f2a59c"/></svg></span></td></tr>
<tr style="background:#fff"><td><span class="cb"></span></td><td>202212121952377173</td><td>admin@admin.com</td><td>-</td><td>先卡用户信息预留（未联系客服勿拍）</td><td>0.10</td><td>1</td><td>0.10</td><td><span class="lbl">未支付</span></td><td>2022-12-12 19:52:37</td><td>无</td><td><span class="ab ae"><svg width="11" height="11" viewBox="0 0 11 11"><path d="M0 11L0.7 7.7 7.3 1.1 9.9 3.7 3.3 10.3Z M8 0.4L8.6-0.2 11.2 2.4 10.6 3Z" fill="#fff"/><path d="M0.9 7.9L3.1 10.1" stroke="#18bc9c" stroke-width=".6"/></svg></span><span class="ab ad"><svg width="10" height="10" viewBox="0 0 10 10"><path d="M3.2 1.4V0.9A.9.9 0 0 1 4.1 0h1.8a.9.9 0 0 1 .9.9v0.5H10v1.3H0V1.4zM4.2 1.4h1.6V0.9H4.2z" fill="#fff"/><path d="M0.9 3.2h8.2L8.6 9.3a.8.8 0 0 1-.8.7H2.2a.8.8 0 0 1-.8-.7z" fill="#fff"/><rect x="3.1" y="4.3" width="1.1" height="4.5" fill="#f2a59c"/><rect x="5.8" y="4.3" width="1.1" height="4.5" fill="#f2a59c"/></svg></span></td></tr>
<tr style="background:#f9f9f9"><td><span class="cb"></span></td><td>202212111707069869</td><td>1160160903@qq.com</td><td>-</td><td>京东E卡（4000面值）</td><td>445.00</td><td>1</td><td>445.00</td><td><span class="lbl">未支付</span></td><td>2022-12-11 17:07:06</td><td>无</td><td><span class="ab ae"><svg width="11" height="11" viewBox="0 0 11 11"><path d="M0 11L0.7 7.7 7.3 1.1 9.9 3.7 3.3 10.3Z M8 0.4L8.6-0.2 11.2 2.4 10.6 3Z" fill="#fff"/><path d="M0.9 7.9L3.1 10.1" stroke="#18bc9c" stroke-width=".6"/></svg></span><span class="ab ad"><svg width="10" height="10" viewBox="0 0 10 10"><path d="M3.2 1.4V0.9A.9.9 0 0 1 4.1 0h1.8a.9.9 0 0 1 .9.9v0.5H10v1.3H0V1.4zM4.2 1.4h1.6V0.9H4.2z" fill="#fff"/><path d="M0.9 3.2h8.2L8.6 9.3a.8.8 0 0 1-.8.7H2.2a.8.8 0 0 1-.8-.7z" fill="#fff"/><rect x="3.1" y="4.3" width="1.1" height="4.5" fill="#f2a59c"/><rect x="5.8" y="4.3" width="1.1" height="4.5" fill="#f2a59c"/></svg></span></td></tr>
<tr style="background:#fff"><td><span class="cb"></span></td><td>202212111703099815</td><td>121@63.com</td><td>-</td><td>先卡用户信息预留（未联系客服勿拍）</td><td>0.10</td><td>1</td><td>0.10</td><td><span class="lbl">未支付</span></td><td>2022-12-11 17:03:09</td><td>无</td><td><span class="ab ae"><svg width="11" height="11" viewBox="0 0 11 11"><path d="M0 11L0.7 7.7 7.3 1.1 9.9 3.7 3.3 10.3Z M8 0.4L8.6-0.2 11.2 2.4 10.6 3Z" fill="#fff"/><path d="M0.9 7.9L3.1 10.1" stroke="#18bc9c" stroke-width=".6"/></svg></span><span class="ab ad"><svg width="10" height="10" viewBox="0 0 10 10"><path d="M3.2 1.4V0.9A.9.9 0 0 1 4.1 0h1.8a.9.9 0 0 1 .9.9v0.5H10v1.3H0V1.4zM4.2 1.4h1.6V0.9H4.2z" fill="#fff"/><path d="M0.9 3.2h8.2L8.6 9.3a.8.8 0 0 1-.8.7H2.2a.8.8 0 0 1-.8-.7z" fill="#fff"/><rect x="3.1" y="4.3" width="1.1" height="4.5" fill="#f2a59c"/><rect x="5.8" y="4.3" width="1.1" height="4.5" fill="#f2a59c"/></svg></span></td></tr>
</tbody></table>
<div class="abs" style="left:15px;top:556px;line-height:19px;font-size:13px;color:#333;white-space:nowrap">显示第 11 到第 20 条记录，总共 20 条记录 每页显示</div>
<div class="abs" style="left:322px;top:551px;width:50px;height:31px;border:1px solid #ddd;border-radius:3px;background:#f4f4f4"><span class="abs" style="left:13px;top:0;line-height:29px;font-size:12px">10</span><svg class="abs" style="left:29px;top:12px" width="8" height="5" viewBox="0 0 8 5"><path d="M0 4.5L4 0.5 8 4.5z" fill="#333"/></svg></div>
<div class="abs" style="left:376px;top:556px;line-height:19px;font-size:13px;color:#333">条记录</div>
<div class="abs" style="left:1342.5px;top:549px;width:192.5px;height:32px;border:1px solid #ddd;border-radius:3px;background:#fafafa"></div>
<div class="abs" style="left:1342.5px;top:549px;width:64.5px;height:32px;color:#666;text-align:center;line-height:31px;font-size:13px">上一页</div>
<div class="abs" style="left:1407px;top:549px;width:31px;height:32px;color:#666;text-align:center;line-height:31px;font-size:13px">1</div>
<div class="abs" style="left:1438px;top:549px;width:33px;height:32px;background:#2c3e50;color:#fff;text-align:center;line-height:31px;font-size:13px">2</div>
<div class="abs" style="left:1471px;top:549px;width:64px;height:32px;color:#666;text-align:center;line-height:31px;font-size:13px">下一页</div>
<div class="abs" style="left:1406.5px;top:549px;width:1px;height:32px;background:#ddd"></div>
<div class="abs" style="left:1540px;top:549px;width:50px;height:31px;border:1px solid #ccd3db;background:#fff"></div>
<div class="abs" style="left:1595px;top:549px;width:50px;height:31px;border:1px solid #ddd;border-radius:3px;background:#f4f4f4;text-align:center;line-height:29px;font-size:12px;color:#333">跳转</div>
</div>
<div class="abs" style="left:878px;top:369px;font-size:50px;line-height:60px;color:rgba(255,255,255,.6);text-shadow:1px 2px 3px rgba(0,0,0,.22);white-space:nowrap;letter-spacing:-3px">DK源码</div><div class="abs" style="left:829px;top:481px;font-size:48px;line-height:60px;font-weight:bold;letter-spacing:-0.4px;color:rgba(255,255,255,.7);text-shadow:-1px 1px 2px rgba(0,0,0,.18);white-space:nowrap">dkeym.com</div><div class="abs" style="left:1818px;top:866px;width:85px;height:29px;border:3px solid #9a9a9a;background:#fff;box-shadow:inset 0 0 6px rgba(0,0,0,.35)"></div><div class="abs" style="left:1812px;top:868px;width:98px;height:1px;background:#888"></div><div class="abs" style="left:1808px;top:895px;width:98px;height:1px;background:#888"></div><div class="abs" style="left:1817px;top:862px;width:1px;height:38px;background:#888"></div><div class="abs" style="left:1903px;top:863px;width:1px;height:48px;background:#999"></div><div class="abs" style="left:1828px;top:871px;width:17px;height:20px;background:#fff;font-size:15px;line-height:20px;color:#222;font-family:'Liberation Serif',serif">英</div><svg class="abs" style="left:1851px;top:873px" width="14" height="15" viewBox="0 0 14 15"><path d="M8 1C12.5 3 12.5 11 5.5 13.2 3.5 13.8 1.5 13 1.2 12.2 6.5 12 10 6.5 8 1z" fill="#ddd" stroke="#666" stroke-width=".9"/><path d="M4 11.5l5-2.5M6 9.5l3.5-3M8.6 7l1.6-2.6" stroke="#999" stroke-width=".6"/></svg><svg class="abs" style="left:1875px;top:873px" width="17" height="15" viewBox="0 0 17 15"><path d="M6 1L1.5 8.5H6z M9.5 14l5-6.5h-5z" fill="#d5d5d5" stroke="#777" stroke-width=".8"/><path d="M6.2 1v12.5M9.3 1.5v12.5" stroke="#777" stroke-width="1.1"/></svg>
</body></html>
